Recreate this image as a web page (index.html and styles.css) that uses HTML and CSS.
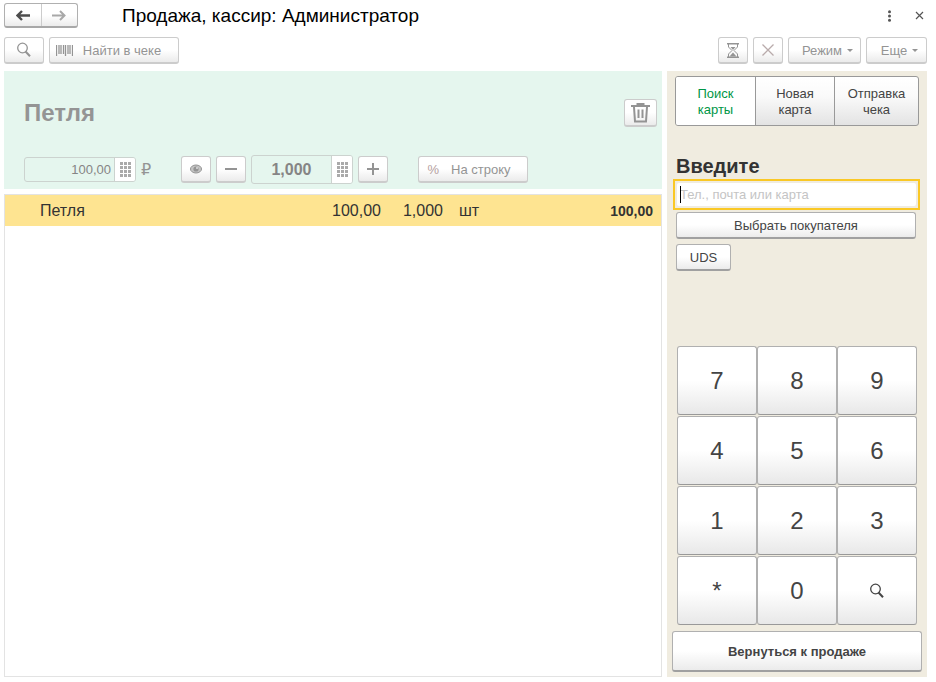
FILE: index.html
```html
<!DOCTYPE html>
<html lang="ru">
<head>
  <meta charset="UTF-8">
  <meta name="viewport" content="width=device-width, initial-scale=1.0">
  <title>Продажа, кассир: Администратор</title>
  <link rel="stylesheet" href="styles.css">
</head>
<body>

<!-- Shared icons -->
<svg class="sprite" aria-hidden="true">
  <symbol id="icon-search" viewBox="0 0 16 16">
    <circle cx="6.500" cy="6" r="4.800" fill="none" stroke="currentColor" stroke-width="1.300"/>
    <path d="M9.500 9.500L14 14.300" fill="none" stroke="currentColor" stroke-width="2"/>
  </symbol>
  <symbol id="icon-keypad" viewBox="0 0 11 15">
    <path d="M0 1.5H11M0 5.5H11M0 9.5H11M0 13.5H11" fill="none" stroke="currentColor" stroke-width="3" stroke-dasharray="3 1"/>
  </symbol>
</svg>

<header class="title-bar">
  <div class="history">
    <button type="button" class="history-button" aria-label="Назад">
      <svg width="14" height="11" viewBox="0 0 14 11"><path d="M1.5 5.5H14M6 1L1.5 5.5L6 10" fill="none" stroke="#4d4d4d" stroke-width="2.4"/></svg>
    </button>
    <button type="button" class="history-button" aria-label="Вперед">
      <svg width="14" height="11" viewBox="0 0 14 11"><path d="M0 5.5H12.5M8 1L12.5 5.5L8 10" fill="none" stroke="#a8a8a8" stroke-width="2"/></svg>
    </button>
  </div>
  <h1 class="title">Продажа, кассир: Администратор</h1>
  <button type="button" class="window-button" aria-label="Меню">
    <svg width="5" height="12" viewBox="0 0 5 12" fill="#555"><circle cx="2.5" cy="1.7" r="1.5"/><circle cx="2.5" cy="6" r="1.5"/><circle cx="2.5" cy="10.3" r="1.5"/></svg>
  </button>
  <button type="button" class="window-button" aria-label="Закрыть">
    <svg width="9" height="9" viewBox="0 0 9 9"><path d="M1 1L8 8M8 1L1 8" fill="none" stroke="#555" stroke-width="1.2"/></svg>
  </button>
</header>

<div class="toolbar">
  <button type="button" class="button muted search-button" aria-label="Найти">
    <svg width="16" height="16"><use href="#icon-search"/></svg>
  </button>
  <button type="button" class="button muted find-button">
    <svg width="17" height="11" viewBox="0 0 17 11"><path d="M.5 0V11M3 0V9M5 0V9M7.5 0V9M9.5 0V11M12 0V9M14 0V9M16.5 0V11" fill="none" stroke="currentColor" stroke-width="1.300"/></svg>
    Найти в чеке
  </button>
  <div class="toolbar-right">
    <button type="button" class="button muted icon-button" aria-label="Отложить чек">
      <svg width="12" height="15" viewBox="0 0 12 15"><path d="M0 .7H12M0 14.300H12" fill="none" stroke="currentColor" stroke-width="1.400"/><path d="M1.500 1V4L5 7.500L1.500 11V14M10.500 1V4L7 7.500L10.500 11V14" fill="none" stroke="currentColor"/><path d="M3.500 4H8.500L6 7ZM2.500 13.500L6 9.500L9.500 13.500Z" fill="currentColor"/></svg>
    </button>
    <button type="button" class="button muted icon-button" aria-label="Отменить чек">
      <svg width="12" height="12" viewBox="0 0 12 12"><path d="M.5 .5L11.500 11.500M11.500 .5L.5 11.500" fill="none" stroke="#b9abab" stroke-width="1.3"/></svg>
    </button>
    <button type="button" class="button muted menu-button">Режим <span class="arrow"></span></button>
    <button type="button" class="button muted menu-button more-button">Еще <span class="arrow"></span></button>
  </div>
</div>

<main class="workspace">
  <div class="receipt">
    <section class="product">
      <div class="product-head">
        <h2 class="product-name">Петля</h2>
        <button type="button" class="button muted delete-button" aria-label="Удалить">
          <svg width="19" height="20" viewBox="0 0 19 20"><path d="M0 3H19M6.500 2V1H12.500V2M3 4L4 18.500H15L16 4M7.500 6.500V15M11.500 6.500V15" fill="none" stroke="currentColor" stroke-width="2"/></svg>
        </button>
      </div>
      <div class="product-controls">
        <div class="field price-field">
          <input type="text" class="field-input" value="100,00" aria-label="Цена">
          <button type="button" class="field-button" aria-label="Ввести цену"><svg width="11" height="15"><use href="#icon-keypad"/></svg></button>
        </div>
        <span class="currency">₽</span>
        <button type="button" class="button muted icon-button eye-button" aria-label="Показать товар">
          <svg width="12" height="10" viewBox="0 0 12 10"><ellipse cx="6" cy="5" rx="5.500" ry="4" fill="#c4c4c4" stroke="currentColor"/><circle cx="6" cy="5" r="2.600" fill="currentColor"/><circle cx="7" cy="4" r="1" fill="#ddd"/></svg>
        </button>
        <button type="button" class="button muted icon-button" aria-label="Уменьшить">
          <svg width="12" height="12" viewBox="0 0 12 12"><path d="M0 6H12" stroke="currentColor" stroke-width="2"/></svg>
        </button>
        <div class="field quantity-field">
          <input type="text" class="field-input" value="1,000" aria-label="Количество">
          <button type="button" class="field-button" aria-label="Ввести количество"><svg width="11" height="15"><use href="#icon-keypad"/></svg></button>
        </div>
        <button type="button" class="button muted icon-button" aria-label="Увеличить">
          <svg width="12" height="12" viewBox="0 0 12 12"><path d="M0 6H12M6 0V12" fill="none" stroke="currentColor" stroke-width="2"/></svg>
        </button>
        <button type="button" class="button muted discount-button"><span class="percent">%</span>На строку</button>
      </div>
    </section>

    <div class="list">
      <table class="items">
        <tr class="selected">
          <td>Петля</td>
          <td class="price">100,00</td>
          <td class="quantity">1,000</td>
          <td class="unit">шт</td>
          <td class="total">100,00</td>
        </tr>
      </table>
    </div>
  </div>

  <aside class="customer">
    <div class="tabs">
      <button type="button" class="tab active">Поиск карты</button>
      <button type="button" class="tab">Новая карта</button>
      <button type="button" class="tab">Отправка чека</button>
    </div>
    <div class="customer-form">
      <label class="customer-label" for="customerInput">Введите</label>
      <div class="customer-field">
        <input type="text" id="customerInput" class="customer-input" placeholder="Тел., почта или карта">
      </div>
      <button type="button" class="button choose-button">Выбрать покупателя</button>
      <button type="button" class="button uds-button">UDS</button>
    </div>
    <div class="keypad">
      <button type="button" class="key">7</button>
      <button type="button" class="key">8</button>
      <button type="button" class="key">9</button>
      <button type="button" class="key">4</button>
      <button type="button" class="key">5</button>
      <button type="button" class="key">6</button>
      <button type="button" class="key">1</button>
      <button type="button" class="key">2</button>
      <button type="button" class="key">3</button>
      <button type="button" class="key">*</button>
      <button type="button" class="key">0</button>
      <button type="button" class="key" aria-label="Найти"><svg width="16" height="16"><use href="#icon-search"/></svg></button>
    </div>
    <button type="button" class="button return-button">Вернуться к продаже</button>
  </aside>
</main>

</body>
</html>
```
FILE: styles.css
```css
* {
  box-sizing: border-box;
}

body {
  display: flex;
  flex-direction: column;
  min-height: 100vh;
  margin: 0;
  padding: 3px 9px 5px 4px;
  background-color: #fff;
  font-family: "Liberation Sans", Arial, sans-serif;
  font-size: 13px;
  color: #333;
}

button,
input {
  margin: 0;
  padding: 0;
  font: inherit;
  color: inherit;
}

svg {
  display: block;
  flex: none;
}

.sprite {
  position: absolute;
  width: 0;
  height: 0;
}

/* Title bar */
.title-bar {
  display: flex;
  align-items: center;
  height: 25px;
}

.history {
  display: flex;
  width: 74px;
  height: 25px;
  border: 1px solid #b0b0b0;
  border-bottom: 2px solid #a8a8a8;
  border-radius: 3px;
  background: linear-gradient(#fff 50%, #ececec);
}

.history-button {
  display: flex;
  flex: 1;
  align-items: center;
  justify-content: center;
  border: none;
  background: none;
}

.history-button + .history-button {
  border-left: 1px solid #ccc;
}

.title {
  flex: 1;
  margin: 0 0 0 44px;
  font-size: 19px;
  font-weight: normal;
  color: #000;
}

.window-button {
  display: flex;
  align-items: center;
  justify-content: center;
  width: 30px;
  height: 25px;
  border: none;
  background: none;
}

.window-button:last-child {
  margin-right: -7px;
}

/* Buttons */
.button {
  display: flex;
  align-items: center;
  justify-content: center;
  height: 27px;
  border: 1px solid #b0b0b0;
  border-bottom: 2px solid #a0a0a0;
  border-radius: 3px;
  background: linear-gradient(#fff 50%, #ebebeb);
  color: #444;
}

.muted {
  border-color: #ccc;
  color: #949494;
}

.icon-button {
  width: 30px;
}

/* Toolbar */
.toolbar {
  display: flex;
  gap: 5px;
  margin: 9px 0 7px;
}

.toolbar-right {
  display: flex;
  gap: 5px;
  margin-left: auto;
}

.search-button {
  width: 40px;
}

.find-button {
  gap: 10px;
  width: 130px;
  padding-right: 11px;
}

.menu-button {
  gap: 5px;
  width: 73px;
  padding-left: 6px;
}

.more-button {
  width: 61px;
}

.arrow {
  border: 3px solid transparent;
  border-top-color: #949494;
  border-bottom: none;
}

/* Receipt */
.workspace {
  display: flex;
  flex: 1;
  gap: 5px;
}

.receipt {
  display: flex;
  flex: 1;
  flex-direction: column;
  gap: 5px;
}

.product {
  padding: 28px 5px 5px 20px;
  background-color: #e5f6ee;
}

.product-head {
  display: flex;
  align-items: center;
  justify-content: space-between;
  height: 28px;
}

.product-name {
  margin: 0;
  font-size: 24px;
  line-height: 30px;
  color: #949494;
}

.delete-button {
  width: 33px;
  height: 28px;
}

.product-controls {
  display: flex;
  align-items: center;
  gap: 5px;
  margin-top: 28px;
}

.field {
  display: flex;
  border: 1px solid #ccd3cf;
  border-radius: 3px;
  color: #858585;
}

.field-input {
  flex: 1;
  width: 0;
  border: none;
  background: none;
}

.field-button {
  display: flex;
  align-items: center;
  justify-content: center;
  width: 21px;
  border: none;
  border-left: 1px solid #ccd3cf;
  border-radius: 0 2px 2px 0;
  background-color: #fff;
  color: #aaa;
}

.price-field {
  width: 112px;
  height: 25px;
}

.price-field .field-input {
  padding-right: 3px;
  text-align: right;
}

.quantity-field {
  width: 102px;
  height: 29px;
  font-size: 16px;
  font-weight: bold;
}

.quantity-field .field-input {
  text-align: center;
}

.currency {
  width: 10px;
  font-family: "DejaVu Sans", sans-serif;
  font-size: 16px;
  line-height: 20px;
  color: #949494;
}

.eye-button {
  margin-left: 25px;
}

.discount-button {
  gap: 12px;
  width: 110px;
  margin-left: 25px;
  padding-right: 8px;
}

.percent {
  color: #b5a0a0;
}

.list {
  flex: 1;
  border: 1px solid #e3e3e3;
}

.items {
  width: 100%;
  border-collapse: collapse;
  font-size: 16px;
}

.items td {
  height: 31px;
  padding: 0;
}

.items td:first-child {
  padding-left: 35px;
}

.selected {
  background-color: #fee491;
}

.price {
  width: 100px;
  text-align: right;
}

.quantity {
  width: 62px;
  text-align: right;
}

.items .unit {
  width: 80px;
  padding-left: 16px;
}

.items .total {
  width: 138px;
  padding-right: 8px;
  font-size: 14px;
  font-weight: bold;
  text-align: right;
}

/* Customer panel */
.customer {
  display: flex;
  flex-direction: column;
  width: 260px;
  padding: 5px;
  background-color: #f0ece0;
}

.tabs {
  display: flex;
  height: 50px;
  margin: 0 3px;
  border: 1px solid #999;
  border-radius: 3px;
  background: linear-gradient(#fff, #fafafa 40%, #e3e3e3);
}

.tab {
  flex: 1 1 79px;
  padding: 2px 10px 0;
  border: none;
  background: none;
  line-height: 16px;
  color: #444;
}

.tab:last-child {
  flex-basis: 84px;
}

.tab + .tab {
  border-left: 1px solid #999;
}

.tab.active {
  border-radius: 2px 0 0 2px;
  background-color: #fff;
  color: #009646;
}

.customer-form {
  display: flex;
  flex-direction: column;
  margin: 28px 6px 0 4px;
}

.customer-label {
  font-size: 20px;
  font-weight: bold;
  line-height: 25px;
}

.customer-field {
  position: relative;
  margin: 0 -4px 2px -3px;
  padding: 2px;
  border: 2px solid #fac825;
}

/* Text cursor */
.customer-field::before {
  content: "";
  position: absolute;
  top: 5px;
  left: 5px;
  width: 1px;
  height: 17px;
  background-color: #000;
}

.customer-input {
  display: block;
  width: 100%;
  height: 23px;
  padding: 0 3px;
  border: none;
  border-radius: 2px;
  background-color: #fff;
}

.customer-input::placeholder {
  color: #c4c4c4;
}

.uds-button {
  width: 55px;
  margin-top: 5px;
}

.keypad {
  display: grid;
  grid-template-columns: repeat(3, 1fr);
  row-gap: 1px;
  margin: auto 5px 6px;
}

.key {
  display: flex;
  align-items: center;
  justify-content: center;
  height: 69px;
  border: 1px solid #b0b0b0;
  border-bottom-color: #999;
  border-radius: 3px;
  background: linear-gradient(#fff 50%, #e8e8e8);
  font-size: 24px;
  color: #444;
}

.return-button {
  height: 41px;
  font-weight: bold;
}
```
